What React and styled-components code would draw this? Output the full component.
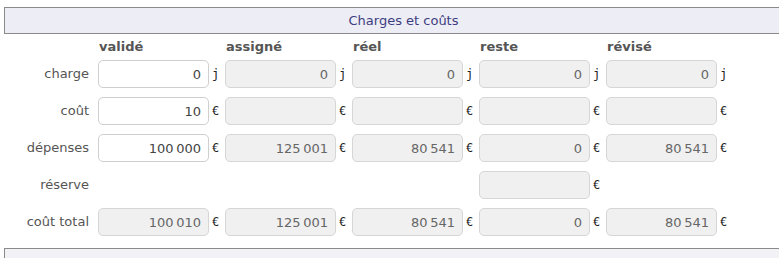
import React from "react";
import styled, { createGlobalStyle } from "styled-components";

const GlobalStyle = createGlobalStyle`
  html, body {
    margin: 0;
    padding: 0;
    background: #fff;
    overflow: hidden;
  }
  body {
    font-family: "DejaVu Sans", Verdana, sans-serif;
    font-size: 13px;
    color: #555;
  }
`;

const Page = styled.div`
  padding: 7px 0 0 4px;
`;

const PanelHeader = styled.div`
  width: 799px;
  height: 27px;
  box-sizing: border-box;
  border: 1px solid #8a8a8a;
  background: #ededf5;
  color: #3d3d82;
  display: flex;
  align-items: center;
  justify-content: center;
  font-size: 13px;
`;

const Table = styled.div`
  display: flex;
  flex-direction: column;
  padding-bottom: 12px;
`;

const Row = styled.div`
  display: grid;
  grid-template-columns: 94px repeat(5, 127px);
  height: ${(p) => (p.$head ? "14px" : "28px")};
  margin-top: ${(p) => (p.$head ? "6px" : p.$first ? "6px" : "9px")};
  align-items: center;
`;

const Label = styled.div`
  text-align: right;
  padding-right: 9px;
  color: #555;
  white-space: nowrap;
  line-height: 16px;
`;

const ColHead = styled.div`
  grid-column: ${(p) => p.$col + 2};
  font-weight: bold;
  color: #555;
  line-height: 14px;
  padding-left: 1px;
`;

const Cell = styled.div`
  grid-column: ${(p) => p.$col + 2};
  display: flex;
  align-items: center;
  height: 28px;
`;

const Field = styled.div`
  width: 111px;
  height: 28px;
  box-sizing: border-box;
  border: 1px solid ${(p) => (p.$editable ? "#cfcfcf" : "#d6d6d6")};
  border-radius: 5px;
  background: ${(p) => (p.$editable ? "#fff" : "#f0f0f0")};
  color: ${(p) => (p.$editable ? "#444" : "#666")};
  display: flex;
  align-items: center;
  justify-content: flex-end;
  padding-right: 7px;
  font-size: 13px;
`;

const Unit = styled.span`
  font-family: "DejaVu Sans Mono", monospace;
  font-size: 12px;
  color: #222;
  padding-left: 3px;
`;

const BottomPanel = styled.div`
  width: 799px;
  height: 20px;
  box-sizing: border-box;
  border: 1px solid #8a8a8a;
  background: #f1f1f6;
`;

const heads = ["validé", "assigné", "réel", "reste", "révisé"];

const nb = "\u202F";

const rows = [
  {
    label: "charge",
    unit: "j",
    cells: [
      { v: "0", edit: true },
      { v: "0" },
      { v: "0" },
      { v: "0" },
      { v: "0" },
    ],
  },
  {
    label: "coût",
    unit: "€",
    cells: [{ v: "10", edit: true }, { v: "" }, { v: "" }, { v: "" }, { v: "" }],
  },
  {
    label: "dépenses",
    unit: "€",
    cells: [
      { v: `100${nb}000`, edit: true },
      { v: `125${nb}001` },
      { v: `80${nb}541` },
      { v: "0" },
      { v: `80${nb}541` },
    ],
  },
  {
    label: "réserve",
    unit: "€",
    cells: [null, null, null, { v: "" }, null],
  },
  {
    label: "coût total",
    unit: "€",
    cells: [
      { v: `100${nb}010` },
      { v: `125${nb}001` },
      { v: `80${nb}541` },
      { v: "0" },
      { v: `80${nb}541` },
    ],
  },
];

export default function App() {
  return (
    <Page>
      <GlobalStyle />
      <PanelHeader>Charges et coûts</PanelHeader>
      <Table>
        <Row $head>
          {heads.map((h, i) => (
            <ColHead key={h} $col={i}>
              {h}
            </ColHead>
          ))}
        </Row>
        {rows.map((r, ri) => (
          <Row key={r.label} $first={ri === 0}>
            <Label>{r.label}</Label>
            {r.cells.map((c, i) =>
              c ? (
                <Cell key={i} $col={i}>
                  <Field $editable={c.edit}>{c.v}</Field>
                  <Unit>{r.unit}</Unit>
                </Cell>
              ) : null
            )}
          </Row>
        ))}
      </Table>
      <BottomPanel />
    </Page>
  );
}
